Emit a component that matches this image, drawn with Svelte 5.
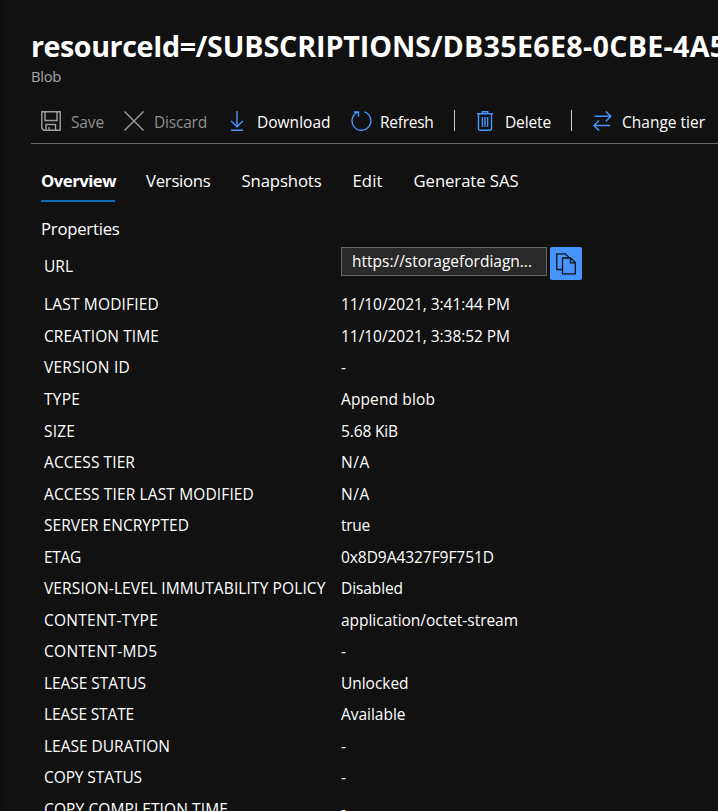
<script>
  const tabs = [
    { label: 'Overview', width: 75, active: true },
    { label: 'Versions', width: 64.5 },
    { label: 'Snapshots', width: 80 },
    { label: 'Edit', width: 30 },
    { label: 'Generate SAS', width: 105 }
  ];

  // label, label width, value, value width
  const rows = [
    ['LAST MODIFIED', 115, '11/10/2021, 3:41:44 PM', 169],
    ['CREATION TIME', 115, '11/10/2021, 3:38:52 PM', 169],
    ['VERSION ID', 86, '-', 6],
    ['TYPE', 36, 'Append blob', 94],
    ['SIZE', 31, '5.68 KiB', 57],
    ['ACCESS TIER', 91, 'N/A', 29],
    ['ACCESS TIER LAST MODIFIED', 210, 'N/A', 29],
    ['SERVER ENCRYPTED', 145, 'true', 29],
    ['ETAG', 37, '0x8D9A4327F9F751D', 153],
    ['VERSION-LEVEL IMMUTABILITY POLICY', 281.5, 'Disabled', 62],
    ['CONTENT-TYPE', 114, 'application/octet-stream', 177],
    ['CONTENT-MD5', 113.5, '-', 6],
    ['LEASE STATUS', 102, 'Unlocked', 67.5],
    ['LEASE STATE', 90, 'Available', 64.5],
    ['LEASE DURATION', 126, '-', 6],
    ['COPY STATUS', 98, '-', 6],
    ['COPY COMPLETION TIME', 184, '-', 6]
  ];

  // Tracks the letters of a label so that it spans the given width.
  function fit(node, width) {
    const natural = node.getBoundingClientRect().width;
    const count = node.textContent.length;
    if (count > 1) node.style.letterSpacing = `${(width - natural) / count}px`;
  }
</script>

{#snippet text(value, width)}<span class="t" use:fit={width}>{value}</span>{/snippet}

<div class="blade">
  <header>
    <h1>{@render text('resourceId=/', 176)}{@render text('SUBSCRIPTIONS/', 235.5)}{@render text('DB35E6E8-0CBE-4A5', 284)}</h1>
    <p>{@render text('Blob', 30)}</p>
  </header>

  <nav class="toolbar">
    <button class="save off">
      <svg width="20" height="20" viewBox="0 0 20 20"><path d="M.8.8h18.4v18.4H2.8l-2-2zM4 .8v8.7h12V.8M5 19v-5.5h9.5V19M8 19v-3" /></svg>
      {@render text('Save', 33)}
    </button>
    <button class="discard off">
      <svg width="20" height="20" viewBox="0 0 20 20"><path d="M.5.5l19 19M19.5.5l-19 19" /></svg>
      {@render text('Discard', 53)}
    </button>
    <button class="download">
      <svg width="14" height="20" viewBox="0 0 14 20"><path d="M7 0v15.5M1.2 10L7 15.8 12.8 10M1 19.2h12" /></svg>
      {@render text('Download', 73.5)}
    </button>
    <button class="refresh">
      <svg width="21" height="20" viewBox="0 0 21 20"><path d="M13.3.9a9.4 9.4 0 1 1-6.5.3M2.8 1h4.7v4.8" /></svg>
      {@render text('Refresh', 53.5)}
    </button>
    <i></i>
    <button class="delete">
      <svg width="16" height="20" viewBox="0 0 16 20"><path d="M0 2.8h16M5.3 2.5V.7h5.4v1.8M1.5 3v14.8q0 1.4 1.4 1.4h10.2q1.4 0 1.4-1.4V3M5.4 6v10M8 6v10M10.6 6v10" /></svg>
      {@render text('Delete', 46)}
    </button>
    <i></i>
    <button class="tier">
      <svg width="19" height="20" viewBox="0 0 19 20"><path d="M1.5 5.3h16.3M12.8.4l5 4.9-5 4.9M17 14.5H1M6 9.6l-5 4.9 5 4.9" /></svg>
      {@render text('Change tier', 83)}
    </button>
  </nav>

  <nav class="tabs">
    {#each tabs as tab}
      <button class:active={tab.active}>{@render text(tab.label, tab.width)}</button>
    {/each}
  </nav>

  <section>
    <h2>{@render text('Properties', 78.5)}</h2>
    <div class="row url">
      <span class="key">{@render text('URL', 29)}</span>
      <div class="field">{@render text('https://storagefordiagn...', 180)}</div>
      <button class="copy" aria-label="Copy to clipboard">
        <svg width="20" height="22" viewBox="0 0 20 22"><path d="M6 16.5H.8V.8h8.4l4 3.8M6.5 5h8.2l4.6 4.6v11.2H6.5zM14.5 5v4.8h4.8" /></svg>
      </button>
    </div>
    {#each rows as [key, keyWidth, value, valueWidth]}
      <div class="row">
        <span class="key">{@render text(key, keyWidth)}</span>
        <span>{@render text(value, valueWidth)}</span>
      </div>
    {/each}
  </section>
</div>

<style>
  :global(body) { background: #111; }
  .blade {
    box-sizing: border-box;
    width: 718px;
    height: 811px;
    overflow: hidden;
    padding: 27px 0 0 31px;
    background: linear-gradient(90deg, #0e0e0e 5px, #111 7px);
    color: #fff;
    font: 15.5px/20px "Open Sans", "Noto Sans", sans-serif;
    white-space: nowrap;
  }
  .t { display: inline-block; }
  h1, h2, p { margin: 0; }
  h1 { font-size: 28.7px; font-weight: 700; line-height: 38px; }
  p { margin-top: 1px; color: #a6a6a6; font-size: 14.8px; line-height: 20px; }
  button { border: 0; padding: 0; background: none; color: inherit; font: inherit; }
  svg { flex: none; display: block; fill: none; stroke: #4894fe; stroke-width: 1.4; }
  .toolbar {
    box-sizing: border-box;
    display: flex;
    height: 44px;
    margin-top: 14px;
    padding: 0 0 2px 10px;
    border-bottom: 1px solid #666;
    align-items: center;
  }
  .toolbar button { display: flex; align-items: center; flex: none; }
  .toolbar .t { padding-top: 3px; }
  .off { color: #8f8f8f; }
  .off svg { stroke: #a0a0a0; }
  .save { width: 83px; gap: 10px; }
  .discard { width: 106px; gap: 10px; }
  .download { width: 121px; gap: 13px; }
  .refresh { width: 103px; gap: 8px; }
  .toolbar i { width: 1px; height: 21px; background: #ccc; flex: none; }
  .delete { width: 94px; margin-left: 22px; gap: 12px; }
  .toolbar .tier { margin-left: 21px; gap: 10px; }
  .tabs { display: flex; gap: 31px; padding: 25px 0 0 10px; font-size: 16.7px; }
  .tabs button { height: 33px; line-height: 24px; padding-bottom: 7px; flex: none; border-bottom: 2px solid transparent; }
  .tabs .active { width: 74px; font-weight: 700; border-color: #0f6cbd; }
  section { padding-left: 10px; }
  h2 { margin-top: 15px; font-size: 16.7px; font-weight: 400; line-height: 24px; }
  .row { display: flex; height: 31.53px; align-items: center; padding-left: 3px; }
  .key { width: 297px; flex: none; }
  .url { height: 47.7px; align-items: flex-start; padding-top: 6px; box-sizing: border-box; }
  .url .key { padding-top: 9px; }
  .field {
    box-sizing: border-box;
    width: 206px;
    height: 29px;
    padding: 3px 0 0 10px;
    border: 1px solid #666;
    background: #292929;
  }
  .copy {
    display: flex;
    width: 32px;
    height: 33px;
    margin-left: 3px;
    border-radius: 2px;
    background: #4894fe;
    align-items: center;
    justify-content: center;
  }
  .copy svg { stroke: #111; stroke-width: 1.3; }
</style>
